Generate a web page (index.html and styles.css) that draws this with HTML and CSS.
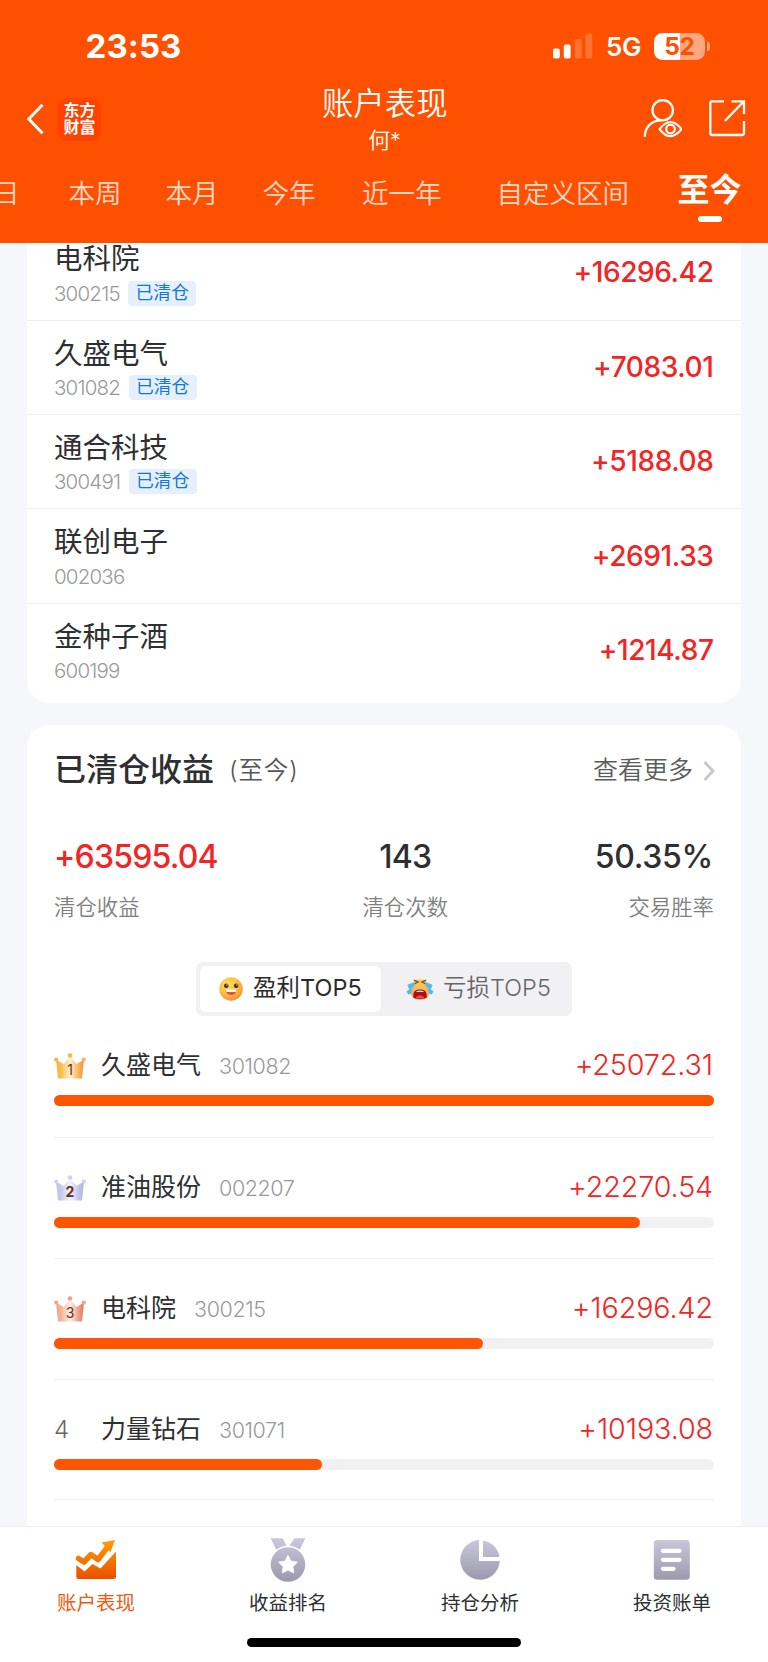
FILE: index.html
```html
<!DOCTYPE html>
<html lang="zh-CN">
<head>
<meta charset="utf-8">
<title>账户表现</title>
<link rel="stylesheet" href="styles.css">
</head>
<body>
<div class="app">
  <header class="header">
    <div class="status">
      <span class="clock">23:53</span>
      <div class="status-right">
        <svg class="signal" width="40" height="26" viewBox="0 0 40 26" fill="#fff">
          <rect x="0" y="15.5" width="6.8" height="10" rx="1.8"/>
          <rect x="10.8" y="11.5" width="6.8" height="14" rx="1.8"/>
          <rect x="21.8" y="6" width="6.8" height="19.5" rx="1.8" opacity=".2"/>
          <rect x="32.4" y="0.5" width="6.8" height="25" rx="1.8" opacity=".2"/>
        </svg>
        <span class="network">5G</span>
        <div class="battery"><span class="battery-level">52</span><i class="battery-cap"></i></div>
      </div>
    </div>
    <div class="navbar">
      <div class="nav-left">
        <svg width="18" height="32" viewBox="0 0 18 32" fill="none" stroke="#fff" stroke-width="3"><path d="M16.5 1.8 2.8 16l13.7 14.2"/></svg>
        <div class="logo"><span>东方</span><span>财富</span></div>
      </div>
      <div class="nav-title"><h1>账户表现</h1><p>何*</p></div>
      <div class="nav-right">
        <svg width="40" height="40" viewBox="0 0 40 40" fill="none" stroke="#fff" stroke-width="2.3">
          <circle cx="20.7" cy="11.2" r="10.2"/>
          <path d="M2.8 37.8C3 28 9.500 21.400 19.500 21.400"/>
          <path d="M17.500 30.200Q28.500 15.800 39.500 30.200Q28.500 44.200 17.500 30.200Z" stroke-width="2.200"/>
          <circle cx="28.500" cy="30" r="4.300" stroke-width="2.200"/>
        </svg>
        <svg width="38" height="38" viewBox="0 0 38 38" fill="none" stroke="#fff" stroke-width="2.3">
          <path d="M16 2.300H4.300a2 2 0 0 0-2 2V34a2 2 0 0 0 2 2H34a2 2 0 0 0 2-2V22"/>
          <path d="M23.500 2.300H36V15M36 2.300 16.800 22"/>
        </svg>
      </div>
    </div>
    <nav class="tabs">
      <span>日</span><span>本周</span><span>本月</span><span>今年</span><span>近一年</span><span>自定义区间</span><span class="on">至今</span>
    </nav>
  </header>

  <main class="main">
    <section class="card holdings">
      <div class="stock"><div><h3>电科院</h3><p><span class="code">300215</span><em>已清仓</em></p></div><b>+16296.42</b></div>
      <div class="stock"><div><h3>久盛电气</h3><p><span class="code">301082</span><em>已清仓</em></p></div><b>+7083.01</b></div>
      <div class="stock"><div><h3>通合科技</h3><p><span class="code">300491</span><em>已清仓</em></p></div><b>+5188.08</b></div>
      <div class="stock"><div><h3>联创电子</h3><p><span class="code">002036</span></p></div><b>+2691.33</b></div>
      <div class="stock"><div><h3>金种子酒</h3><p><span class="code">600199</span></p></div><b>+1214.87</b></div>
    </section>

    <section class="card cleared">
      <div class="cleared-head">
        <h2>已清仓收益</h2><span class="range">(至今)</span>
        <span class="more">查看更多</span>
        <svg width="12" height="22" viewBox="0 0 12 22" fill="none" stroke="#c8c8c8" stroke-width="2.800"><path d="M1.500 2 10 11 1.500 20"/></svg>
      </div>
      <div class="stats">
        <div><b class="up">+63595.04</b><span>清仓收益</span></div>
        <div><b>143</b><span>清仓次数</span></div>
        <div><b>50.35%</b><span>交易胜率</span></div>
      </div>
      <div class="segment">
        <div class="seg on">
          <svg width="24" height="24" viewBox="0 0 24 24">
            <defs><radialGradient id="smile" cx=".38" cy=".3" r=".75"><stop offset="0" stop-color="#ffe05a"/><stop offset=".6" stop-color="#fdbb3c"/><stop offset="1" stop-color="#ee8a3e"/></radialGradient></defs>
            <circle cx="12" cy="12" r="11.700" fill="url(#smile)"/>
            <circle cx="7.300" cy="8.800" r="2.300" fill="#49301f"/><circle cx="17.200" cy="8.800" r="2.300" fill="#49301f"/>
            <circle cx="8" cy="8" r=".7" fill="#fff"/><circle cx="18" cy="8" r=".7" fill="#fff"/>
            <path d="M6.800 12.400H17.400Q17 18 12 18T6.800 12.400Z" fill="#e8503c"/><path d="M6.800 12.200H17.400L16.800 15H7.400Z" fill="#fff"/>
          </svg>
          <span>盈利TOP5</span>
        </div>
        <div class="seg">
          <svg width="28" height="24" viewBox="0 0 28 24">
            <defs><linearGradient id="cry" x2="0" y2="1"><stop offset="0" stop-color="#fbd469"/><stop offset="1" stop-color="#ef9f3d"/></linearGradient></defs>
            <circle cx="14" cy="12.500" r="10.500" fill="url(#cry)"/>
            <path d="M8 3.200 12 5 8 7M20 3.200 16 5 20 7" fill="none" stroke="#79492a" stroke-width="1.300"/>
            <path d="M7.400 21V17Q8 12.600 14 12.600T20.600 17V21Q14 23 7.400 21Z" fill="#a80f1c"/>
            <path d="M10.500 14Q14 12.800 17.500 14V14.900H10.500Z" fill="#f3d9d0"/><path d="M10 20Q14 16.500 18 20V21.500H10Z" fill="#e94b4f"/>
            <path d="M1.400 8Q5 5.600 8.800 6.200 8.500 11.500 3 12ZM26.600 8Q23 5.600 19.200 6.200 19.500 11.500 25 12Z" fill="#55b9f2"/>
            <path d="M.5 14.500Q3 11.500 6.200 11.800 6 17 2.200 17.500ZM27.500 14.500Q25 11.500 21.800 11.800 22 17 25.800 17.500Z" fill="#55b9f2"/>
          </svg>
          <span>亏损TOP5</span>
        </div>
      </div>
      <div class="ranks">
        <div class="rank">
          <div class="rank-line">
            <div class="crown gold"><svg width="32" height="26" viewBox="0 0 32 26"><defs><linearGradient id="c1"><stop offset="0" stop-color="#fbb33c"/><stop offset=".18" stop-color="#fbbd4b"/><stop offset=".5" stop-color="#fff1cf"/><stop offset=".8" stop-color="#f8b75a"/><stop offset="1" stop-color="#ef9340"/></linearGradient></defs><g fill="url(#c1)"><path d="M2 6.500 9.500 11 16 3.500 22.500 11 30 6.500 28 25.500H4Z"/></g><g fill="#f9b451"><circle cx="2.200" cy="6.500" r="2.100"/><circle cx="16" cy="2.500" r="2.300"/><circle cx="29.800" cy="6.500" r="2.100"/></g></svg><span>1</span></div>
            <strong>久盛电气</strong><span class="code">301082</span><b>+25072.31</b>
          </div>
          <div class="bar"><i style="width:100%"></i></div>
        </div>
        <div class="rank">
          <div class="rank-line">
            <div class="crown silver"><svg width="32" height="26" viewBox="0 0 32 26"><defs><linearGradient id="c2"><stop offset="0" stop-color="#bfc3e8"/><stop offset=".18" stop-color="#c7caea"/><stop offset=".5" stop-color="#f4f4fc"/><stop offset=".8" stop-color="#c3c6ec"/><stop offset="1" stop-color="#adb3e5"/></linearGradient></defs><g fill="url(#c2)"><path d="M2 6.500 9.500 11 16 3.500 22.500 11 30 6.500 28 25.500H4Z"/></g><g fill="#ced2f2"><circle cx="2.200" cy="6.500" r="2.100"/><circle cx="16" cy="2.500" r="2.300"/><circle cx="29.800" cy="6.500" r="2.100"/></g></svg><span>2</span></div>
            <strong>准油股份</strong><span class="code">002207</span><b>+22270.54</b>
          </div>
          <div class="bar"><i style="width:88.8%"></i></div>
        </div>
        <div class="rank">
          <div class="rank-line">
            <div class="crown bronze"><svg width="32" height="26" viewBox="0 0 32 26"><defs><linearGradient id="c3"><stop offset="0" stop-color="#f3a283"/><stop offset=".18" stop-color="#f6b196"/><stop offset=".5" stop-color="#fff0e8"/><stop offset=".8" stop-color="#eea388"/><stop offset="1" stop-color="#df765a"/></linearGradient></defs><g fill="url(#c3)"><path d="M2 6.500 9.500 11 16 3.500 22.500 11 30 6.500 28 25.500H4Z"/></g><g fill="#f1a287"><circle cx="2.200" cy="6.500" r="2.100"/><circle cx="16" cy="2.500" r="2.300"/><circle cx="29.800" cy="6.500" r="2.100"/></g></svg><span>3</span></div>
            <strong>电科院</strong><span class="code">300215</span><b>+16296.42</b>
          </div>
          <div class="bar"><i style="width:65%"></i></div>
        </div>
        <div class="rank">
          <div class="rank-line">
            <div class="place">4</div>
            <strong>力量钻石</strong><span class="code">301071</span><b>+10193.08</b>
          </div>
          <div class="bar"><i style="width:40.65%"></i></div>
        </div>
      </div>
    </section>
  </main>

  <footer class="footer">
    <svg class="defs" width="0" height="0"><defs>
      <linearGradient id="hot" gradientUnits="userSpaceOnUse" x1="0" y1="2" x2="0" y2="42"><stop offset="0" stop-color="#ff9d00"/><stop offset="1" stop-color="#ea4e00"/></linearGradient>
      <linearGradient id="cool" gradientUnits="userSpaceOnUse" x1="0" y1="0" x2="0" y2="44"><stop offset="0" stop-color="#cbc9dd"/><stop offset="1" stop-color="#9997ab"/></linearGradient>
    </defs></svg>
    <div class="menu">
      <div class="item on">
        <svg width="44" height="46" viewBox="0 0 44 46"><path d="M2.300 27 10.500 33.500 18.500 26 26.500 30.500 42 13.500V38.500Q42 41 39.500 41H4.500Q2.300 41 2.300 38.500Z" fill="url(#hot)"/><path d="M4.500 20.500 10 24 17 16.500 24 21.500 34 8.500" fill="none" stroke="url(#hot)" stroke-width="5.500" stroke-linecap="round" stroke-linejoin="round"/><path d="M27.500 4.500 41 2 36.500 14Z" fill="url(#hot)"/></svg>
        <span>账户表现</span>
      </div>
      <div class="item">
        <svg width="44" height="46" viewBox="0 0 44 46"><path d="M4.500.3H15.700Q17 .3 17.500 1.500L20.300 7.500Q14.500 8.300 10.300 11.500ZM39.500.3H29.500Q28 .3 27.500 1.500L23.700 7.500Q29.500 8.300 33.700 11.500Z" fill="url(#cool)"/><circle cx="22" cy="26.500" r="17.300" fill="url(#cool)"/><path d="M22 17.500 24.900 23.100 31.200 24.200 26.800 28.700 27.700 34.800 22 32 16.300 34.800 17.200 28.700 12.800 24.200 19.100 23.100Z" fill="#fff" stroke="#fff" stroke-width="1" stroke-linejoin="round"/></svg>
        <span>收益排名</span>
      </div>
      <div class="item">
        <svg width="44" height="46" viewBox="0 0 44 46"><path d="M21 2.100A19.800 19.800 0 1 0 41.800 23H21Z" fill="url(#cool)"/><path d="M25 2.400A19.800 19.800 0 0 1 41.500 18.900H25Z" fill="url(#cool)"/></svg>
        <span>持仓分析</span>
      </div>
      <div class="item">
        <svg width="44" height="46" viewBox="0 0 44 46"><rect x="3.800" y="2" width="36" height="39.800" rx="3.500" fill="url(#cool)"/><path d="M13 12.800H29.500M13 21.800H29.500M13 30.800H23.500" stroke="#fff" stroke-width="4.300" stroke-linecap="round"/></svg>
        <span>投资账单</span>
      </div>
    </div>
    <div class="home"></div>
  </footer>
</div>
</body>
</html>
```
FILE: styles.css
```css
* { box-sizing: border-box; margin: 0; padding: 0; }
body { font-family: Inter, "Noto Sans CJK SC", sans-serif; color: #2e2f31; background: #f6f7fa; }
h1, h2, h3 { font-weight: 400; }
svg { display: block; flex: none; }
i, em { font-style: normal; }
span, b, strong, h1, h2, h3 { white-space: nowrap; }

.app { width: 768px; height: 1662px; display: flex; flex-direction: column; overflow: hidden; }

/* header */
.header { flex: none; height: 242.5px; background: #ff5000; color: #fff; }
.status { height: 92px; padding: 0 63px 0 85.500px; display: flex; align-items: center; justify-content: space-between; }
.clock { font-size: 33px; font-weight: 700; line-height: 92px; letter-spacing: 0.1px; }
.status-right { display: flex; align-items: center; }
.network { margin-left: 13px; width: 36px; font-size: 26px; font-weight: 600; line-height: 30px; letter-spacing: -0.3px; padding-top: 2px; }
.battery { position: relative; margin-left: 12px; width: 51px; height: 27px; border-radius: 8.5px; background: linear-gradient(90deg, #fff 26px, #ffa880 26px); }
.battery-level { display: block; text-align: center; font-size: 24.500px; font-weight: 700; line-height: 27px; letter-spacing: -0.4px; color: #ff5000; }
.battery-cap { position: absolute; left: 52.500px; top: 9px; width: 3.500px; height: 9px; border-radius: 0 4px 4px 0; background: #ffa880; }

.navbar { height: 76px; padding: 0 22.500px 0 26px; display: grid; grid-template-columns: 1fr 200px 1fr; }
.nav-left { display: flex; align-items: center; height: 54px; gap: 14px; }
.logo { width: 43px; height: 43px; border-radius: 9px; background: #ff4200; display: flex; flex-direction: column; align-items: center; padding-top: 3px; font-family: "Noto Sans CJK SC", sans-serif; font-weight: 700; font-size: 16px; line-height: 17.500px; }
.nav-title { text-align: center; transform: translateX(-1px); }
.nav-title h1 { font-size: 31.400px; font-weight: 350; line-height: 24px; }
.nav-title p { font-size: 21.500px; font-weight: 350; line-height: 24px; margin-top: 12px; }
.nav-right { display: flex; justify-content: flex-end; align-items: flex-start; gap: 26px; padding-top: 7px; }

.tabs { display: flex; font-size: 26.500px; font-weight: 350; line-height: 51px; color: rgba(255,255,255,.8); margin-left: -7px; }
.tabs span:nth-child(2) { margin-left: 49px; }
.tabs span:nth-child(3), .tabs span:nth-child(4) { margin-left: 44px; }
.tabs span:nth-child(5) { margin-left: 46.500px; }
.tabs span:nth-child(6) { margin-left: 55px; }
.tabs .on { margin-left: 48.500px; font-size: 32px; font-weight: 700; line-height: 44px; color: #fff; display: flex; flex-direction: column; align-items: center; }
.tabs .on::after { content: ""; width: 24px; height: 6px; margin-top: 4px; border-radius: 3px; background: #fff; }

/* content */
.main { flex: 1; min-height: 0; overflow: hidden; padding: 0 27px; display: flex; flex-direction: column; }
.card { flex: none; background: #fff; }
.holdings { height: 460.500px; border-radius: 0 0 22px 22px; }
.stock { height: 94.400px; padding: 0 27px; display: flex; justify-content: space-between; border-bottom: 1px solid #eee; }
.stock:first-child { height: 78px; }
.stock:last-child { border-bottom: 0; }
.stock h3 { font-size: 28.500px; line-height: 34px; margin-top: 16px; }
.stock:first-child h3 { margin-top: -0.500px; }
.stock p { display: flex; align-items: center; height: 25px; margin-top: 4.500px; }
.code { font-weight: 350; color: #999; font-size: 20.500px; letter-spacing: -0.8px; }
.stock em { margin-left: 8.500px; width: 68px; height: 25px; border-radius: 4px; background: #e6f0fc; color: #0f76e8; font-size: 17.800px; line-height: 24px; text-align: center; }
.stock b { font-size: 28px; font-weight: 500; color: #f32424; letter-spacing: -0.4px; line-height: 34px; margin-top: 29.500px; margin-right: 0.500px; }
.stock:first-child b { margin-top: 12.500px; }

.cleared { margin-top: 22px; height: 830px; border-radius: 22px 22px 0 0; padding: 0 27px; }
.cleared-head { display: flex; align-items: center; height: 92px; }
.cleared-head h2 { font-size: 32px; font-weight: 500; line-height: 40px; margin-bottom: 2px; }
.range { margin-left: 15px; font-size: 24.500px; font-weight: 350; letter-spacing: 0.9px; color: #555; line-height: 30px; margin-bottom: 2px; }
.more { margin-left: auto; margin-right: 10px; font-size: 25px; font-weight: 350; color: #5c5c5c; line-height: 30px; margin-bottom: 2px; }
.cleared-head svg { margin-right: -1px; }
.stats { display: flex; justify-content: space-between; height: 145px; padding-top: 20px; }
.stats div { display: flex; flex-direction: column; align-items: center; }
.stats div:first-child { align-items: flex-start; }
.stats div:nth-child(2) { margin-left: -2px; }
.stats div:last-child { align-items: flex-end; }
.stats b { font-size: 32px; font-weight: 500; line-height: 40px; letter-spacing: -0.8px; }
.stats .up { color: #f32424; }
.stats div:last-child b { margin-right: 1px; letter-spacing: -0.300px; }
.stats span { font-size: 21.400px; font-weight: 350; line-height: 30px; margin-top: 15px; color: #808080; }
.segment { width: 376px; height: 53.500px; margin: 0 auto; padding: 4px; border-radius: 7px; background: #f1f1f4; display: flex; }
.seg { width: 181px; border-radius: 6px; display: flex; align-items: center; padding-left: 19px; font-size: 23.400px; color: #666; font-weight: 350; letter-spacing: 0.1px; }
.seg span { margin-left: 10px; line-height: 30px; margin-bottom: 2px; }
.seg.on { background: #fff; color: #2b2b2b; font-weight: 400; }
.seg:last-child { padding-left: 25px; }
.seg:last-child span { margin-left: 9px; }

.ranks { margin-top: 30.500px; }
.rank { height: 121.100px; }
.rank + .rank { border-top: 1.500px solid #eee; padding-top: 30px; }
.rank:first-child { height: 91px; }
.rank:last-child { border-bottom: 1.500px solid #eee; }
.rank-line { display: flex; align-items: center; height: 40px; }
.crown { position: relative; width: 32px; height: 26px; margin-right: 15px; }
.crown span { position: absolute; left: 0; right: 0; top: 8px; text-align: center; font-size: 14px; line-height: 17px; color: #6b2d1e; }
.silver span { font-weight: 700; }
.place { width: 47px; font-size: 24px; font-weight: 350; color: #666; margin-bottom: 1px; }
.rank strong { font-size: 25px; font-weight: 400; line-height: 30px; margin-bottom: 3px; }
.rank .code { margin-left: 18px; font-size: 21.500px; letter-spacing: -0.4px; margin-bottom: 1px; }
.rank b { margin-left: auto; margin-right: 1px; font-size: 28.700px; font-weight: 350; color: #f32424; letter-spacing: -0.1px; line-height: 34px; margin-bottom: 2px; }
.bar { height: 11px; margin-top: 9px; border-radius: 6px; background: #f1f1f4; }
.bar i { display: block; height: 11px; border-radius: 6px; background: #ff5500; }

/* bottom menu */
.footer { flex: none; height: 136px; background: #fff; border-top: 1.500px solid #eee; display: flex; flex-direction: column; align-items: center; }
.defs { position: absolute; }
.menu { display: flex; width: 768px; padding-top: 11px; }
.item { flex: 1; display: flex; flex-direction: column; align-items: center; }
.item span { font-size: 19.500px; line-height: 24px; margin-top: 7px; }
.item.on span { color: #f0590f; }
.home { width: 274px; height: 9px; margin-top: 23px; border-radius: 5px; background: #000; }
```
